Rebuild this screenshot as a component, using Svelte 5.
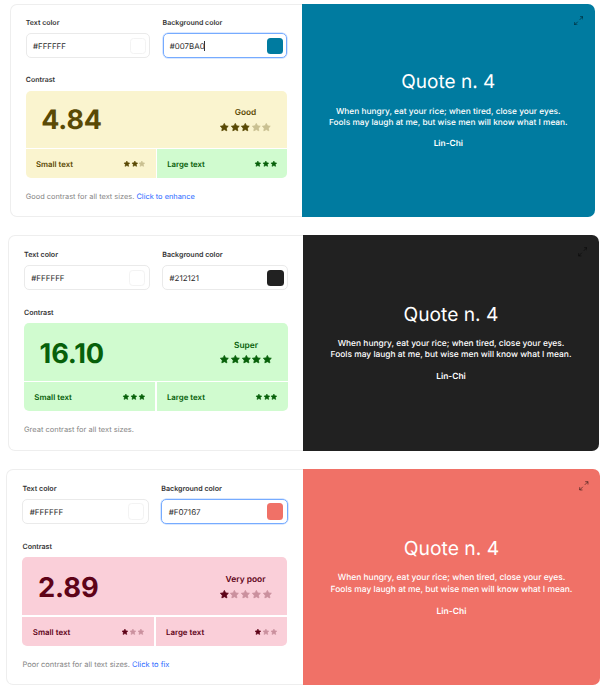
<script>
  const cards = [
    {
      id: 'good', unit: 1, bg: '#007BA0', focused: true, caret: true,
      ratio: '4.84', rating: 'Good', stars: 3, tone: 'yellow',
      small: { stars: 2, tone: 'yellow' }, large: { stars: 3, tone: 'green' },
      note: 'Good contrast for all text sizes.', link: 'Click to enhance'
    },
    {
      id: 'super', unit: 1.0105, bg: '#212121', focused: false, caret: false,
      ratio: '16.10', rating: 'Super', stars: 5, tone: 'green',
      small: { stars: 3, tone: 'green' }, large: { stars: 3, tone: 'green' },
      note: 'Great contrast for all text sizes.', link: ''
    },
    {
      id: 'poor', unit: 1.0155, bg: '#F07167', focused: true, caret: false,
      ratio: '2.89', rating: 'Very poor', stars: 1, tone: 'pink',
      small: { stars: 1, tone: 'pink' }, large: { stars: 1, tone: 'pink' },
      note: 'Poor contrast for all text sizes.', link: 'Click to fix'
    }
  ];
</script>

{#snippet stars(filled, total)}
  <span class="stars">
    {#each Array(total) as _, i}
      <svg class="star" class:dim={i >= filled} viewBox="0 0 24 24">
        <path d="M12 3.2l2.8 5.5 6.1.9-4.3 4.3 1 6L12 17.2l-5.6 2.7 1-6L3.1 9.6l6.1-.9z" />
      </svg>
    {/each}
  </span>
{/snippet}

{#snippet field(label, value, swatch, focused, caret)}
  <div class="field">
    <div class="label">{label}</div>
    <div class="input" class:focused>
      <span class="value">{value}</span>{#if caret}<i class="caret"></i>{/if}
      <span class="swatch" class:white={swatch === '#FFFFFF'} style="background: {swatch}"></span>
    </div>
  </div>
{/snippet}

<main>
  {#each cards as card}
    <section class="card {card.id}" style="--u: {card.unit}px">
      <div class="form">
        <div class="fields">
          {@render field('Text color', '#FFFFFF', '#FFFFFF', false, false)}
          {@render field('Background color', card.bg, card.bg, card.focused, card.caret)}
        </div>
        <div class="label contrast">Contrast</div>
        <div class="result">
          <div class="score {card.tone}">
            <span class="ratio">{card.ratio}</span>
            <div class="rating">
              <span>{card.rating}</span>
              {@render stars(card.stars, 5)}
            </div>
          </div>
          <div class="sizes">
            <div class="size {card.small.tone}"><span>Small text</span>{@render stars(card.small.stars, 3)}</div>
            <div class="size {card.large.tone}"><span>Large text</span>{@render stars(card.large.stars, 3)}</div>
          </div>
        </div>
        <p class="note">{card.note}{#if card.link}{' '}<a href="#enhance">{card.link}</a>{/if}</p>
      </div>
      <div class="preview" style="background: {card.bg}">
        <svg class="expand" viewBox="0 0 10 10">
          <path d="M6 4L9.2 .8M6.4.7h2.9v2.9M4 6L.8 9.2M.7 6.4v2.9h2.9" />
        </svg>
        <h2>Quote n. 4</h2>
        <p>When hungry, eat your rice; when tired, close your eyes.<br />Fools may laugh at me, but wise men will know what I mean.</p>
        <strong>Lin-Chi</strong>
      </div>
    </section>
  {/each}
</main>

<style>
  :global(body) { margin: 0; background: #fff; }
  main {
    box-sizing: border-box;
    width: 602px;
    height: 690px;
    overflow: hidden;
    padding-top: 3.7px;
    font-family: Inter, sans-serif;
    font-optical-sizing: none;
    text-rendering: geometricPrecision;
    color: #2b2b2b;
  }
  .card {
    display: flex;
    width: calc(584.8 * var(--u));
    height: calc(213.2 * var(--u));
  }
  .good { margin-left: 10px; }
  .super { margin: 18.4px 0 0 8.1px; }
  .poor { margin: 18.2px 0 0 6.4px; }
  .form {
    box-sizing: border-box;
    width: calc(291.8 * var(--u));
    flex: none;
    border: 1px solid #eee;
    border-right: 0;
    border-radius: calc(7 * var(--u)) 0 0 calc(7 * var(--u));
    padding: calc(13.8 * var(--u)) calc(15 * var(--u)) 0 calc(14.8 * var(--u));
  }
  .fields { display: flex; gap: calc(12.6 * var(--u)); }
  .field { flex: 1; min-width: 0; }
  .label {
    font-size: calc(7 * var(--u));
    line-height: calc(10 * var(--u));
    font-weight: 600;
    color: #333;
  }
  .input {
    box-sizing: border-box;
    display: flex;
    align-items: center;
    height: calc(24.6 * var(--u));
    margin-top: calc(5 * var(--u));
    padding: 0 calc(3.1 * var(--u)) 0 calc(6.2 * var(--u));
    border: 1px solid #eaeaea;
    border-radius: calc(5 * var(--u));
    font-size: calc(7.9 * var(--u));
  }
  .input.focused { border-color: #76abff; box-shadow: 0 0 0 0.5px #b5d2ff; }
  .caret { width: 1px; height: calc(10 * var(--u)); margin-left: -0.5px; background: #333; }
  .swatch {
    box-sizing: border-box;
    width: calc(16.2 * var(--u));
    height: calc(16.2 * var(--u));
    margin-left: auto;
    border-radius: calc(3.5 * var(--u));
  }
  .swatch.white { border: 1px solid #f3f3f3; }
  .contrast { margin-top: calc(17.2 * var(--u)); }
  .result {
    display: flex;
    flex-direction: column;
    gap: calc(1.3 * var(--u));
    margin-top: calc(5.4 * var(--u));
    border-radius: calc(5 * var(--u));
    overflow: hidden;
  }
  .score {
    display: flex;
    align-items: center;
    justify-content: space-between;
    box-sizing: border-box;
    height: calc(57.3 * var(--u));
    padding: 0 calc(14.8 * var(--u)) 0 calc(15.4 * var(--u));
  }
  .ratio {
    padding-top: calc(2.6 * var(--u));
    font-size: calc(26.9 * var(--u));
    font-weight: 750;
    line-height: 1;
    letter-spacing: calc(-0.15 * var(--u));
  }
  .rating {
    display: flex;
    flex-direction: column;
    align-items: center;
    gap: calc(2.2 * var(--u));
    padding-top: calc(1.9 * var(--u));
    font-size: calc(8.3 * var(--u));
    line-height: calc(11 * var(--u));
    font-weight: 600;
  }
  .stars { display: flex; }
  .star { display: block; width: calc(10.6 * var(--u)); height: calc(10.6 * var(--u)); fill: currentColor; stroke: currentColor; stroke-width: 1.8; stroke-linejoin: round; }
  .star.dim { opacity: 0.3; }
  .sizes { display: flex; gap: calc(1.3 * var(--u)); }
  .size {
    flex: 1;
    display: flex;
    align-items: center;
    justify-content: space-between;
    height: calc(28.8 * var(--u));
    padding: calc(0.8 * var(--u)) calc(9.6 * var(--u)) 0 calc(10.2 * var(--u));
    box-sizing: border-box;
    font-size: calc(7.8 * var(--u));
    font-weight: 600;
  }
  .size .star { width: calc(7.7 * var(--u)); height: calc(7.7 * var(--u)); }
  .yellow { background: #faf4cf; color: #5a4a05; }
  .green { background: #d0fbcf; color: #07600a; }
  .pink { background: #facfd9; color: #5e0318; }
  .note {
    margin: calc(13.6 * var(--u)) 0 0;
    font-size: calc(7.4 * var(--u));
    line-height: calc(10 * var(--u));
    color: #858585;
    white-space: nowrap;
  }
  .note a { color: #2868ff; text-decoration: none; }
  .preview {
    position: relative;
    flex: 1;
    display: flex;
    flex-direction: column;
    align-items: center;
    border-radius: 0 calc(7 * var(--u)) calc(7 * var(--u)) 0;
    color: #fff;
    text-align: center;
  }
  .expand {
    position: absolute;
    top: calc(12 * var(--u));
    right: calc(11.5 * var(--u));
    width: calc(9.5 * var(--u));
    height: calc(9.5 * var(--u));
    fill: none;
    stroke: #000;
    stroke-opacity: 0.55;
    stroke-width: 0.9;
  }
  h2 {
    margin: calc(65 * var(--u)) 0 0;
    font-size: calc(19 * var(--u));
    line-height: calc(26 * var(--u));
    font-weight: 400;
  }
  .preview p {
    margin: calc(12 * var(--u)) 0 0;
    font-size: calc(8.33 * var(--u));
    line-height: calc(11 * var(--u));
    font-weight: 500;
    white-space: nowrap;
  }
  strong {
    margin-top: calc(10.6 * var(--u));
    font-size: calc(8.35 * var(--u));
    line-height: calc(11 * var(--u));
    font-weight: 600;
  }
</style>
